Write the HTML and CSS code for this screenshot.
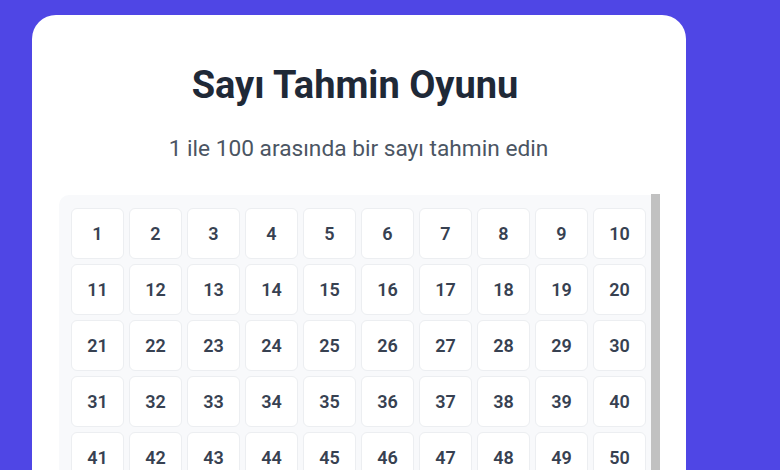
FILE: index.html
```html
<!DOCTYPE html>
<html lang="tr">
<head>
<meta charset="utf-8">
<title>Sayı Tahmin Oyunu</title>
<link rel="stylesheet" href="styles.css">
</head>
<body>
<div class="card">
  <h1 class="title">Sayı Tahmin Oyunu</h1>
  <p class="subtitle">1 ile 100 arasında bir sayı tahmin edin</p>
  <div class="board">
    <div class="grid" id="grid"></div>
    <div class="thumb"></div>
  </div>
</div>
<script src="script.js"></script>
</body>
</html>
```

FILE: script.js
```js
var g = document.getElementById('grid');
for (var i = 1; i <= 100; i++) {
  var b = document.createElement('button');
  b.className = 'cell';
  b.textContent = i;
  g.appendChild(b);
}
```

FILE: styles.css
```css
html, body {
  margin: 0;
  padding: 0;
  overflow: hidden;
  height: 100%;
}
body {
  background: #4f46e5;
  font-family: Roboto, "Noto Sans", "Liberation Sans", sans-serif;
}
.card {
  margin: 15px 0 0 32px;
  width: 654px;
  box-sizing: border-box;
  background: #ffffff;
  border-radius: 24px;
  padding: 47px 26px 40px 27px;
  min-height: 600px;
}
.title {
  margin: 0;
  padding-right: 9px;
  text-align: center;
  font-size: 38px;
  line-height: 46px;
  font-weight: 700;
  color: #1f2937;
}
.subtitle {
  margin: 26px 0 0;
  padding-right: 2px;
  text-align: center;
  font-size: 22.7px;
  line-height: 30px;
  font-weight: 400;
  color: #4b5563;
}
.board {
  position: relative;
  margin-top: 31px;
  background: #f8f9fb;
  border-radius: 10px 0 0 10px;
  padding: 13px 14px 13px 12px;
}
.thumb {
  position: absolute;
  top: -1px;
  right: 0;
  width: 9px;
  height: 400px;
  background: #c1c1c1;
}
.grid {
  display: grid;
  grid-template-columns: repeat(10, 53px);
  grid-auto-rows: 51px;
  gap: 5px;
}
.cell {
  margin: 0;
  padding: 0;
  border: 1px solid #eceef1;
  border-radius: 6px;
  background: #ffffff;
  font-family: Roboto, "Noto Sans", "Liberation Sans", sans-serif;
  font-size: 18px;
  font-weight: 600;
  color: #374151;
}
```
